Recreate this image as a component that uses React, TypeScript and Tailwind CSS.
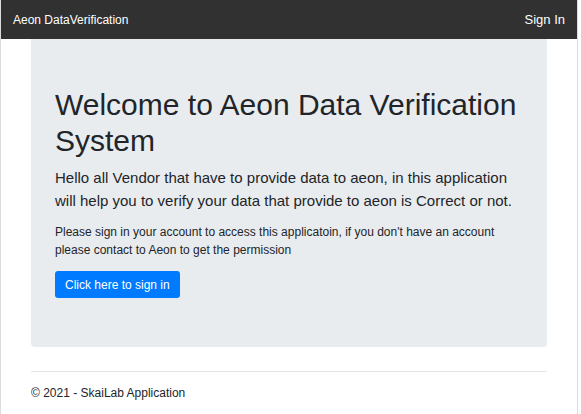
export default function App() {
  return (
    <div className="min-h-[414px] w-[578px] border-x border-[#dcdcdc] bg-white font-['Liberation_Sans',Arial,sans-serif] text-[#212529]">
      <nav className="flex h-[39px] items-center justify-between bg-[#313131] px-3 text-white">
        <span className="text-[12px]">Aeon DataVerification</span>
        <span className="text-[13px]">Sign In</span>
      </nav>

      <main className="px-[30px]">
        <div className="rounded-b-[4px] bg-[#e9ecef] px-6 pt-[48px] pb-[49px]">
          <h1 className="text-[30px] leading-[36px] font-normal">
            Welcome to Aeon Data Verification System
          </h1>
          <p className="mt-[7px] text-[15px] leading-[23px]">
            Hello all Vendor that have to provide data to aeon, in this application will help you to verify your data
            that provide to aeon is Correct or not.
          </p>
          <p className="mt-[11px] text-[12px] leading-[18px]">
            Please sign in your account to access this applicatoin, if you don't have an account please contact to
            Aeon to get the permission
          </p>
          <button className="mt-[12px] h-[27px] rounded-[3px] bg-[#007bff] px-[10px] text-[12px] text-white">
            Click here to sign in
          </button>
        </div>

        <hr className="mt-[24px] border-t border-[#e5e5e5]" />

        <footer className="pt-[12px] text-[12px] leading-[18px]">© 2021 - SkaiLab Application</footer>
      </main>
    </div>
  )
}
